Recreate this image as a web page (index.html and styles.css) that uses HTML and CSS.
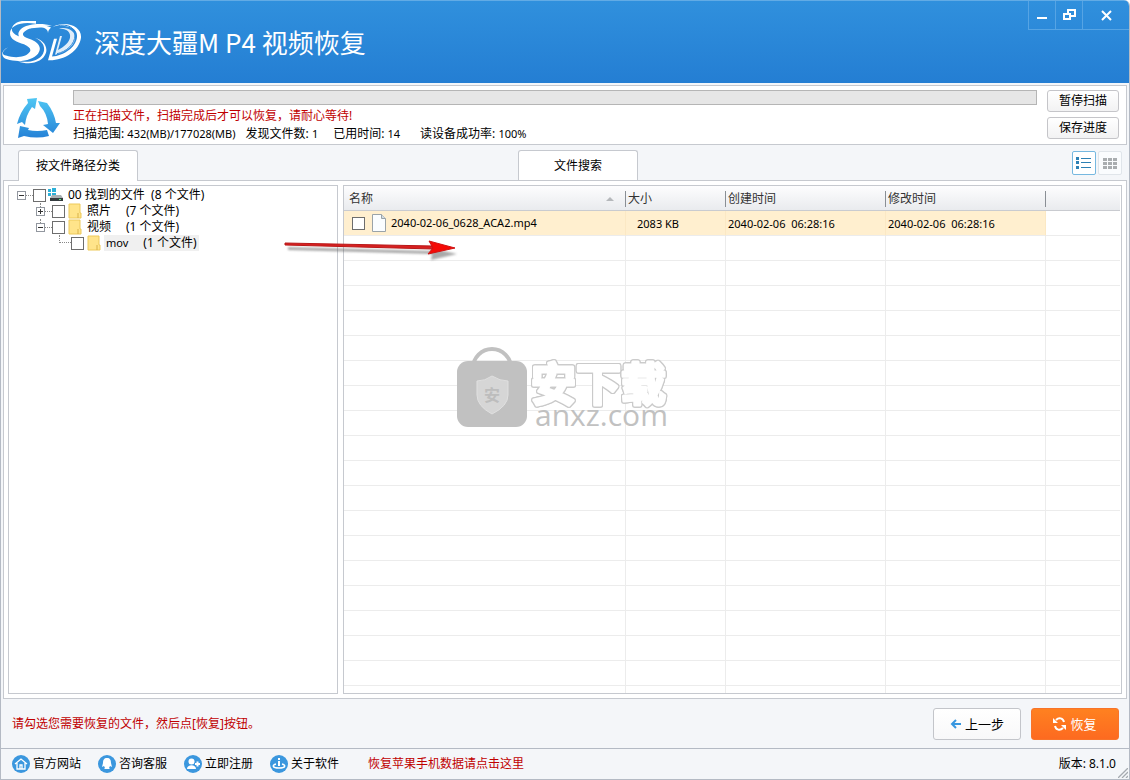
FILE: index.html
```html
<!DOCTYPE html>
<html lang="zh-CN">
<head>
<meta charset="utf-8">
<title>深度大疆MP4 视频恢复</title>
<link rel="stylesheet" href="styles.css">
</head>
<body>
<div class="window">
  <header class="titlebar">
    <svg class="logo" width="82" height="43" viewBox="0 0 82 46" preserveAspectRatio="none" aria-hidden="true">
      <g fill="#fff">
        <path d="M35 3C22 0 9 4 9 13c0 7 7 9 14 12 6 3 8 6 5 9-4 5-14 6-23 3C1 36 0 33 7 28-1 32 0 39 6 41c12 4 26 1 31-6 5-8-1-13-9-16-6-2-8-5-4-8 5-5 17-6 27-6-10-3-23-2-29 2-7 5-6 11 2 14 8 4 13 7 8 13-5 7-16 8-26 5 12 4 24 2 28-6 3-7-3-11-10-14-8-3-14-6-13-11 1-7 11-10 24-8z"/>
        <path d="M28 8c6-4 17-4 22-1-2 2-3 4-3 6 0-4-3-6-8-6-4 0-8 1-11 1z"/>
        <path d="M17 43c10 2 21 0 25-8 3-7 0-13-8-17 7 2 13 8 11 16-3 10-16 14-28 9z"/>
        <path d="M53 19l-6 23c15 1 31-9 33-24C81 6 66-1 52 6c14-3 25 1 24 11-1 11-13 20-25 21l5-19z"/>
        <path d="M59 16l-5 20c10-2 19-9 20-17 1-8-7-13-16-11 8 0 12 4 11 10-1 5-6 10-12 13l4-15z" fill-opacity=".85"/>
      </g>
      <path d="M53 7C61 2 74 4 74 15c0 10-9 18-18 20" fill="none" stroke="#2986d7" stroke-width="1"/>
    </svg>
    <h1 class="title">深度大疆M P4 视频恢复</h1>
    <div class="controls">
      <button type="button" class="control" aria-label="最小化"><svg width="11" height="12" viewBox="0 0 11 12"><path d="M0 8h10v2H0z" fill="#fff"/></svg></button>
      <button type="button" class="control" aria-label="还原"><svg width="13" height="12" viewBox="0 0 13 12" fill="none" stroke="#fff" stroke-width="2"><path d="M5 5V1h7v6H8M1 5h6v5H1z"/></svg></button>
      <button type="button" class="control control-close" aria-label="关闭"><svg width="11" height="12" viewBox="0 0 11 12" stroke="#fff" stroke-width="2"><path d="M1 2l9 9M10 2l-9 9"/></svg></button>
    </div>
  </header>

  <section class="scan">
    <svg class="recycle" width="44" height="42" viewBox="0 0 44 42" aria-hidden="true">
      <defs><linearGradient id="rc" x1="0" y1="0" x2="0" y2="42" gradientUnits="userSpaceOnUse"><stop offset="0" stop-color="#50c8f4"/><stop offset="1" stop-color="#2480d6"/></linearGradient></defs>
      <g fill="url(#rc)">
        <path d="M0 27Q3 15 11 6L10 2l10-1-2 11-3-2Q9 18 8 28l-3-3z"/>
        <path d="M21 4l9 2q7 9 9 20l4 0-7 10-10-8 5-1Q30 16 23 9z"/>
        <path d="M3 29l9 2-1 2q9 2 19 0l2 6q-12 3-25 0l-6 2z"/>
      </g>
    </svg>
    <div class="scan-info">
      <progress class="bar" value="0" max="100" aria-label="扫描进度"></progress>
      <p class="warn">正在扫描文件，扫描完成后才可以恢复，请耐心等待!</p>
      <p class="stats"><span>扫描范围: <span class="value">432(MB)/177028(MB)</span></span><span>发现文件数: <span class="value">1</span></span><span class="spaced">已用时间: <span class="value">14</span></span><span class="rate">读设备成功率: <span class="value">100%</span></span></p>
    </div>
    <div class="scan-actions">
      <button type="button" class="small-button">暂停扫描</button>
      <button type="button" class="small-button">保存进度</button>
    </div>
  </section>

  <nav class="tabs">
    <button type="button" class="tab tab-active">按文件路径分类</button>
    <button type="button" class="tab tab-search">文件搜索</button>
    <div class="views">
      <button type="button" class="view view-active" aria-label="列表视图"><svg width="16" height="12" viewBox="0 0 16 12"><path d="M0 0h3v3H0zM0 4h3v3H0zM0 9h3v3H0zM5 1h10v1H5zM5 5h10v1H5zM5 10h10v1H5z" fill="#2c80b4"/></svg></button>
      <button type="button" class="view" aria-label="图标视图"><svg width="14" height="11" viewBox="0 0 14 11"><path d="M0 0h4v3H0zM5 0h4v3H5zM10 0h4v3h-4zM0 4h4v3H0zM5 4h4v3H5zM10 4h4v3h-4zM0 8h4v3H0zM5 8h4v3H5zM10 8h4v3h-4z" fill="#a9adb0"/></svg></button>
    </div>
  </nav>

  <main class="content">
    <section class="tree">
      <ul class="branch">
        <li>
          <div class="node"><button type="button" class="toggle" aria-label="折叠"></button><span class="dots"></span><label class="node-label"><input type="checkbox" class="check"><svg class="drive" width="17" height="16" viewBox="0 0 17 16"><path d="M1 2h3v3H1zM5 1h4v4H5zM1 6h3v3H1zM5 6h4v3H5z" fill="#2cb0d8"/><path d="M5 8h9l2 3H3z" fill="#a9b0b3"/><path d="M3 11h13v3H3z" fill="#343b3e"/><path d="M12 12h2v1h-2z" fill="#5df28b"/></svg><span class="name name-root">00 找到的文件&nbsp; (8 个文件)</span></label></div>
          <ul class="branch sub">
            <li><div class="node"><button type="button" class="toggle toggle-plus" aria-label="展开"></button><span class="dots"></span><label class="node-label"><input type="checkbox" class="check"><svg class="folder" width="14" height="16" viewBox="0 0 14 16"><path d="M1 1h11v9h1v5H1z" fill="#ffe48a" stroke="#edc95a"/><path d="M10 10v5" stroke="#d8b24a"/></svg><span class="name"><span>照片</span><span>(7 个文件)</span></span></label></div></li>
            <li><div class="node"><button type="button" class="toggle" aria-label="折叠"></button><span class="dots"></span><label class="node-label"><input type="checkbox" class="check"><svg class="folder" width="14" height="16" viewBox="0 0 14 16"><path d="M1 1h11v9h1v5H1z" fill="#ffe48a" stroke="#edc95a"/><path d="M10 10v5" stroke="#d8b24a"/></svg><span class="name"><span>视频</span><span>(1 个文件)</span></span></label></div>
              <ul class="branch leaf">
                <li><div class="node"><span class="elbow"></span><label class="node-label"><input type="checkbox" class="check"><svg class="folder" width="14" height="16" viewBox="0 0 14 16"><path d="M1 1h11v9h1v5H1z" fill="#ffe48a" stroke="#edc95a"/><path d="M10 10v5" stroke="#d8b24a"/></svg><span class="name name-selected"><span class="value">mov</span><span>(1 个文件)</span></span></label></div></li>
              </ul>
            </li>
          </ul>
        </li>
      </ul>
    </section>

    <section class="files">
      <table class="grid">
        <colgroup><col class="c-name"><col class="c-size"><col class="c-date"><col class="c-date"><col></colgroup>
        <thead>
          <tr><th><span class="sort">名称</span></th><th>大小</th><th>创建时间</th><th>修改时间</th><th></th></tr>
        </thead>
        <tbody>
          <tr class="selected"><td><label class="file"><input type="checkbox" class="check"><svg width="14" height="18" viewBox="0 0 14 18"><path d="M.5.5h9l4 4v13H.5z" fill="#fafdff" stroke="#9aa3a8"/><path d="M9.500.5v4h4" fill="#d5dde2" stroke="#9aa3a8"/></svg><span>2040-02-06_0628_ACA2.mp4</span></label></td><td class="size">2083 KB</td><td>2040-02-06&nbsp; 06:28:16</td><td>2040-02-06&nbsp; 06:28:16</td><td class="blank"></td></tr>
          <tr><td></td><td></td><td></td><td></td><td></td></tr>
          <tr><td></td><td></td><td></td><td></td><td></td></tr>
          <tr><td></td><td></td><td></td><td></td><td></td></tr>
          <tr><td></td><td></td><td></td><td></td><td></td></tr>
          <tr><td></td><td></td><td></td><td></td><td></td></tr>
          <tr><td></td><td></td><td></td><td></td><td></td></tr>
          <tr><td></td><td></td><td></td><td></td><td></td></tr>
          <tr><td></td><td></td><td></td><td></td><td></td></tr>
          <tr><td></td><td></td><td></td><td></td><td></td></tr>
          <tr><td></td><td></td><td></td><td></td><td></td></tr>
          <tr><td></td><td></td><td></td><td></td><td></td></tr>
          <tr><td></td><td></td><td></td><td></td><td></td></tr>
          <tr><td></td><td></td><td></td><td></td><td></td></tr>
          <tr><td></td><td></td><td></td><td></td><td></td></tr>
          <tr><td></td><td></td><td></td><td></td><td></td></tr>
          <tr><td></td><td></td><td></td><td></td><td></td></tr>
          <tr><td></td><td></td><td></td><td></td><td></td></tr>
          <tr><td></td><td></td><td></td><td></td><td></td></tr>
          <tr><td></td><td></td><td></td><td></td><td></td></tr>
        </tbody>
      </table>
    </section>

    <svg class="watermark" width="220" height="90" viewBox="0 0 220 90">
      <path d="M18 24a19 19 0 0 1 38 0" fill="none" stroke="#c1c1c1" stroke-width="4"/>
      <rect x="2" y="17" width="70" height="66" rx="11" fill="#c1c1c1"/>
      <path d="M37 32q8 5 16 5v14q0 11-16 19-15-8-15-19V37q8 0 15-5z" fill="#d6d6d6" stroke="#e0e0e0"/>
      <text class="mark-shield" x="29" y="57">安</text>
      <text class="mark-cn" x="76" y="57">安下载</text>
      <text class="mark-en" x="80" y="82">anxz.com</text>
    </svg>
    <svg class="arrow" width="180" height="26" viewBox="0 0 180 26" aria-hidden="true">
      <path class="arrow-shadow" d="M4 8l144 4-1-3 26 6-26 6 1-6L4 11z"/>
      <path d="M1 4l148 3v3L1 6z" fill="#d82020" stroke="#b81818"/>
      <path d="M145 2l26 7-27 6 5-6z" fill="#f50a05" stroke="#d01212"/>
    </svg>
  </main>

  <section class="actions">
    <p class="hint">请勾选您需要恢复的文件，然后点[恢复]按钮。</p>
    <button type="button" class="step step-back"><svg width="11" height="10" viewBox="0 0 11 10" fill="none" stroke="#3797e0" stroke-width="2"><path d="M11 5H2M6 1L2 5l4 4"/></svg>上一步</button>
    <button type="button" class="step step-go"><svg width="13" height="14" viewBox="0 0 13 14"><path d="M3 3c3-3 7-2 8 2M10 11c-3 3-7 2-8-2" fill="none" stroke="#fff" stroke-width="2"/><path d="M0 1v5h5zM13 13V8H8z" fill="#fff"/></svg>恢复</button>
  </section>

  <footer class="status">
    <a href="#" class="link"><svg width="18" height="18" viewBox="0 0 18 18"><circle cx="9" cy="9" r="9" fill="#3b97de"/><path d="M3 9l6-5 6 5M5 8v6h8V8M8 14v-4h2v4" fill="none" stroke="#fff" stroke-width="1.300"/></svg>官方网站</a>
    <a href="#" class="link"><svg width="18" height="18" viewBox="0 0 18 18"><circle cx="9" cy="9" r="9" fill="#3b97de"/><path d="M9 3c3 0 4 2 4 5l1 4-2-1-1 2 1 1H6l1-1-1-2-2 1 1-4c0-3 1-5 4-5z" fill="#fff"/></svg>咨询客服</a>
    <a href="#" class="link"><svg width="18" height="18" viewBox="0 0 18 18"><circle cx="9" cy="9" r="9" fill="#3b97de"/><circle cx="7.500" cy="6.500" r="3" fill="#fff"/><path d="M3 14c0-5 9-5 9 0zM11 8h5v2h-5zM12.500 6.500h2v5h-2z" fill="#fff"/></svg>立即注册</a>
    <a href="#" class="link"><svg width="18" height="18" viewBox="0 0 18 18"><circle cx="9" cy="9" r="9" fill="#3b97de"/><path d="M8 3h2v2H8zM8 6h2v5H8z" fill="#fff"/><path d="M6 9c-4 1-4 4 3 4s7-3 3-4" fill="none" stroke="#fff" stroke-width="1.500"/></svg>关于软件</a>
    <a href="#" class="promo">恢复苹果手机数据请点击这里</a>
    <span class="version">版本: 8.1.0</span>
    <svg class="grip" width="10" height="10" viewBox="0 0 10 10" stroke="#a5aab0" stroke-width="1.300"><path d="M0 10L10 0M4 10l6-6M8 10l2-2"/></svg>
  </footer>
</div>
</body>
</html>
```
FILE: styles.css
```css
* { box-sizing: border-box; }
html, body { height: 100%; }
body {
  margin: 0;
  background: #fff;
  color: #000;
  font: 12px/18px "Noto Sans", "Noto Sans CJK SC", sans-serif;
}
button, input { font: inherit; color: inherit; margin: 0; padding: 0; }
button { cursor: pointer; }
p, h1, ul { margin: 0; padding: 0; }
svg { flex: none; }

.window {
  display: flex;
  flex-direction: column;
  min-height: 100vh;
  background: #f4f6f9;
  border: 1px solid #b4bac4;
  border-top: 0;
  border-radius: 0 6px 0 0;
  overflow: hidden;
}
.value { font-size: 11px; }

.titlebar {
  display: flex;
  align-items: center;
  height: 83px;
  flex: none;
  background: linear-gradient(#3090dd, #247ed3);
  border-top: 1px solid #62abe5;
}
.logo { width: 82px; margin-right: 11px; }
.title {
  flex: 1;
  color: #fff;
  font: 400 26px/40px "Noto Sans CJK SC", sans-serif;
}
.controls {
  display: flex;
  align-self: flex-start;
  border: solid #56a4e4;
  border-width: 0 0 1px 1px;
}
.control {
  width: 27px;
  height: 28px;
  border: 0;
  border-right: 1px solid #56a4e4;
  background: none;
  display: grid;
  place-items: center;
}
.control-close { width: 46px; border-right: 0; }

.scan {
  display: flex;
  margin: 2px 2px 0;
  min-height: 60px;
  flex: none;
  background: #fff;
  border: 1px solid #c6c9cf;
  padding: 4px 7px 0 13px;
}
.recycle { margin: 7px 12px 0 0; }
.scan-info { flex: 1; }
.bar {
  display: block;
  width: 100%;
  height: 15px;
  appearance: none;
  background: #e6e6e6;
  border: 1px solid #b5b5b5;
}
.bar::-webkit-progress-bar { background: #e6e6e6; }
.warn { margin-top: 2px; color: #c00000; }
.stats { display: flex; gap: 10px; }
.spaced { margin-left: 5px; }
.rate { margin-left: 10px; }
.scan-actions {
  display: flex;
  flex-direction: column;
  gap: 5px;
  width: 72px;
  margin-left: 10px;
}
.small-button {
  height: 22px;
  line-height: 18px;
  background: linear-gradient(#fff, #f2f2f3);
  border: 1px solid #c5c5c9;
  border-radius: 3px;
}

.tabs {
  display: flex;
  align-items: flex-end;
  height: 35px;
  flex: none;
  padding: 0 7px 0 17px;
}
.tab {
  width: 120px;
  height: 30px;
  background: #fff;
  border: 1px solid #c6c9cf;
  border-bottom: 0;
  border-radius: 3px 3px 0 0;
}
.tab-active { position: relative; height: 31px; margin-bottom: -1px; z-index: 1; }
.tab-search { margin-left: 380px; }
.views { display: flex; gap: 2px; margin: 0 0 5px auto; }
.view {
  width: 24px;
  height: 24px;
  display: grid;
  place-items: center;
  background: #fafcfe;
  border: 1px solid #e0e5ea;
  border-radius: 2px;
}
.view-active { border-color: #76b8e0; background: #fff; }

.content {
  position: relative;
  display: flex;
  gap: 5px;
  flex: 1;
  margin: 0 2px;
  padding: 4px;
  background: #fff;
  border: 1px solid #c6c9cf;
}
.tree {
  flex: 0 0 330px;
  border: 1px solid #c6c9cf;
  padding: 1px 8px;
}
.branch { list-style: none; }
.sub { padding-left: 19px; }
.sub > li { position: relative; }
.sub > li::before {
  content: "";
  position: absolute;
  left: 4px;
  top: 0;
  height: 12px;
  border-left: 1px dotted #888;
}
.leaf { padding-left: 23px; }
.node { display: flex; align-items: center; height: 16px; }
.toggle {
  position: relative;
  flex: none;
  width: 9px;
  height: 9px;
  border: 1px solid #92979f;
  background: linear-gradient(#333, #333) center / 5px 1px no-repeat #fff;
}
.toggle-plus {
  background:
    linear-gradient(#333, #333) center / 5px 1px no-repeat,
    linear-gradient(#333, #333) center / 1px 5px no-repeat #fff;
}
.dots { width: 7px; border-top: 1px dotted #888; }
.elbow {
  width: 12px;
  height: 8px;
  align-self: flex-start;
  border: dotted #888;
  border-width: 0 0 1px 1px;
}
.node-label { display: flex; align-items: center; }
.check {
  appearance: none;
  flex: none;
  width: 13px;
  height: 13px;
  background: #fff;
  border: 1px solid #6d6d6d;
}
.drive { margin-left: 1px; }
.folder { margin-left: 3px; }
.name {
  display: flex;
  gap: 15px;
  margin-left: 3px;
  padding: 0 2px;
  line-height: 16px;
  white-space: nowrap;
}
.name-root { margin-left: 2px; }
.name-selected { background: #f0f0f0; }

.files {
  flex: 1;
  min-width: 0;
  height: 509px;
  border: 1px solid #c6c9cf;
  padding-right: 1px;
  overflow: hidden;
}
.grid {
  width: 100%;
  table-layout: fixed;
  border-collapse: separate;
  border-spacing: 0;
}
.c-name { width: 282px; }
.c-size { width: 100px; }
.c-date { width: 160px; }
.grid th {
  height: 25px;
  padding: 2px 2px 0;
  font-weight: 400;
  text-align: left;
  color: #333;
  background:
    linear-gradient(#8a8f95, #8a8f95) right 5px / 1px 16px no-repeat,
    linear-gradient(#fdfdfe, #e9ebee);
  border-bottom: 1px solid #c9cbd0;
}
.grid th:first-child { padding: 2px 12px 0 5px; }
.grid th:last-child { background: linear-gradient(#fdfdfe, #e9ebee); }
.sort { display: flex; align-items: center; justify-content: space-between; }
.sort::after {
  content: "";
  border: solid transparent;
  border-width: 0 4px 4px;
  border-bottom-color: #b5b8bb;
}
.grid td {
  height: 25px;
  padding: 2px 2px 0;
  font-size: 11px;
  white-space: nowrap;
  border-right: 1px solid #ececec;
  border-bottom: 1px solid #ececec;
}
.grid td:last-child { border-right: 0; }
.selected td { background: #ffefcf; border-right-color: #fbe8c4; }
.selected td.blank { background: #fff; }
.grid td.size { padding-left: 11px; }
.grid td:first-child { padding-top: 0; }
.file { display: flex; align-items: center; padding-left: 6px; }
.file svg { margin: 0 5px 0 7px; }

.watermark { position: absolute; left: 451px; top: 163px; }
.mark-shield { font: 700 16px "Noto Sans CJK SC", sans-serif; fill: #bdbdbd; }
.mark-cn {
  font: 700 45px "Noto Sans CJK SC", sans-serif;
  fill: #fff;
  stroke: #fff;
  stroke-width: 3px;
  stroke-linejoin: round;
  filter:
    drop-shadow(1px 0 #cacaca) drop-shadow(-1px 0 #cacaca)
    drop-shadow(0 1px #cacaca) drop-shadow(0 -1px #cacaca);
}
.mark-en { font: 400 30px "Open Sans", sans-serif; fill: #c1c1c1; }
.arrow { position: absolute; left: 280px; top: 58px; }
.arrow-shadow { fill: #555; opacity: .5; filter: blur(1px); }

.actions {
  display: flex;
  align-items: center;
  gap: 10px;
  height: 49px;
  flex: none;
  padding: 0 10px 0 11px;
}
.hint { flex: 1; color: #c00000; }
.step {
  display: flex;
  align-items: center;
  justify-content: center;
  gap: 4px;
  width: 88px;
  height: 32px;
  font-size: 13px;
  border-radius: 3px;
}
.step-back { background: linear-gradient(#fff, #f8f8f9); border: 1px solid #c3c5ca; }
.step-go { color: #fff; background: linear-gradient(#ff8120, #fd6a20); border: 1px solid #f8742a; }

.status {
  position: relative;
  display: flex;
  align-items: center;
  height: 31px;
  flex: none;
  padding: 0 13px 0 11px;
  border-top: 1px solid #b4bac4;
}
.link { display: flex; align-items: center; gap: 3px; width: 86px; color: #000; text-decoration: none; }
.promo { margin-left: 12px; color: #c00000; text-decoration: none; }
.version { margin-left: auto; }
.grip { position: absolute; right: 1px; bottom: 1px; }
```
